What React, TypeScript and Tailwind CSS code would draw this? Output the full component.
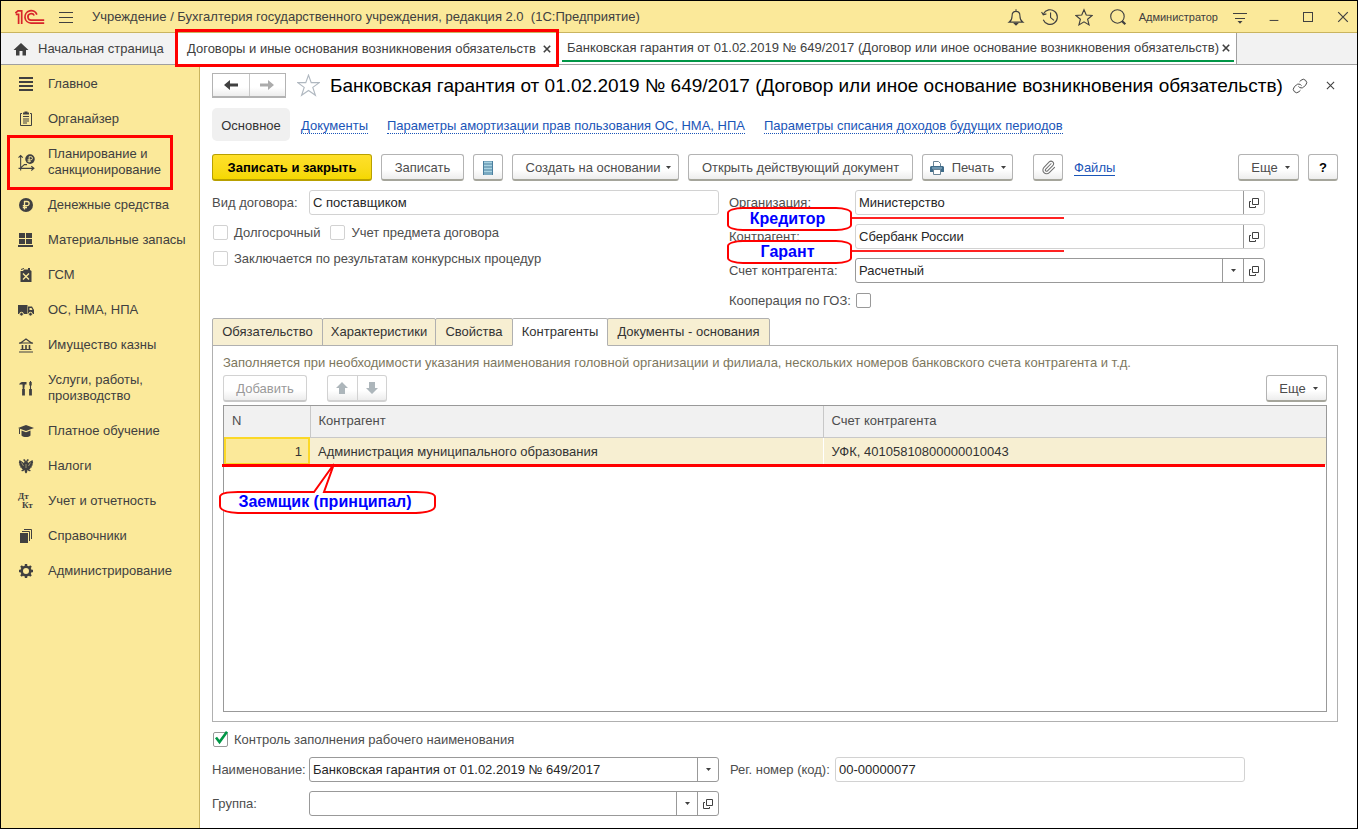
import React, { useState } from "react";
import type { ReactNode } from "react";
import { Link, Paperclip } from "lucide-react";

const Svg = ({ children, className = "size-4" }: { children: ReactNode; className?: string }) => (
  <svg viewBox="0 0 16 16" className={`${className} shrink-0`} fill="none" stroke="currentColor" aria-hidden="true">
    {children}
  </svg>
);

const Logo = () => (
  <svg viewBox="0 0 30 16" className="h-4 w-[30px] shrink-0" fill="none" stroke="#d8232a" strokeWidth="1.7" role="img" aria-label="1С">
    <path d="M.3 4.2 3 1.900h3.700v13M.8 5.400h2.800v9.500" />
    <path d="M21.900 5.600A6.200 6.200 0 1 0 16 14.100h13.200" />
    <path d="M19.200 6.500A3.300 3.300 0 1 0 16 11.200h13.200" />
  </svg>
);

const icons: Record<string, ReactNode> = {
  main: (
    <Svg>
      <path d="M1 2h14M1 6h14M1 10h14M1 14h14" strokeWidth="2" />
    </Svg>
  ),
  organizer: (
    <Svg>
      <path d="M4 2.500H2.500v12h11v-12H12M5 5.500h6M5 8h6M5 10h6M5 12h4" />
      <path d="M5 1.500h1.500V.5h3v1H11v2H5z" fill="currentColor" stroke="none" />
    </Svg>
  ),
  planning: (
    <Svg className="size-[17px]">
      <path d="M2.500 15.500V1.500M.5 3.500l2-2 2 2M.5 13.500h14M12.500 11.500l2.500 2-2.500 2M2.500 13l3.500-3h2.500" />
      <circle cx="11.300" cy="4.800" r="4.500" fill="currentColor" stroke="none" />
      <path d="M10.500 8V2.500h1.600a1.500 1.500 0 0 1 0 3H9M9 6.800h3.200" stroke="#fbe99a" strokeWidth=".9" />
    </Svg>
  ),
  money: (
    <Svg>
      <circle cx="8" cy="8" r="7" fill="currentColor" stroke="none" />
      <path d="M6.500 12.500V4.500h2.500a2 2 0 0 1 0 4.200H4.800M4.800 10.500h4.200" stroke="#fbe99a" strokeWidth="1.300" />
    </Svg>
  ),
  stock: (
    <Svg>
      <path d="M1 1h6v5H1zM8 1h6v5H8zM1 7h6v5H1zM8 7h6v5H8zM0 13h15v2H0z" fill="currentColor" stroke="none" />
    </Svg>
  ),
  fuel: (
    <Svg>
      <path d="M3 4h2L6 2.500h4V1h2v2l1.500 1v11h-11V4z" fill="currentColor" stroke="none" />
      <path d="M3 2.500 6 1.500" />
      <path d="m5 6.500 6 6M11 6.500l-6 6" stroke="#fbe99a" strokeWidth="1.400" />
    </Svg>
  ),
  truck: (
    <Svg>
      <path d="M0 3h9.500v9H0zM10 4.500h4l2 3.500v4h-6z" fill="currentColor" stroke="none" />
      <path d="M11.500 6h2l1 2h-3z" fill="#fbe99a" stroke="none" />
      <circle cx="3.500" cy="12.200" r="1.900" fill="currentColor" stroke="#fbe99a" />
      <circle cx="12.500" cy="12.200" r="1.900" fill="currentColor" stroke="#fbe99a" />
    </Svg>
  ),
  treasury: (
    <Svg>
      <path d="M2.500 6 8 2l5.500 4z" strokeWidth="1.200" />
      <path d="M1 6h2.500M12.500 6H15" />
      <path d="M4.500 8v4M8 8v4M11.500 8v4" strokeWidth="1.600" />
      <path d="M2.500 12.500h11M1 15h14" strokeWidth="1.200" />
    </Svg>
  ),
  services: (
    <Svg>
      <path d="M1 4.500C2 2.500 3.500 2 5 2h3.500v2.500H6.800L6.300 9H4.700l-.2-4.500z" fill="currentColor" stroke="none" />
      <path d="M5.500 9v6.500" strokeWidth="2.800" />
      <path d="M12.500 1v8" strokeWidth="1.100" />
      <path d="M12.500 2v3.500" strokeWidth="2.400" />
      <path d="M12.500 9v6.500" strokeWidth="2.800" />
    </Svg>
  ),
  education: (
    <Svg>
      <path d="M8 2 0 5l8 3 8-3zM3.500 7.500 8 9.200l4.500-1.700v5c-2 2-7 2-9 0z" fill="currentColor" stroke="none" />
      <path d="M1.500 5.500V11" />
    </Svg>
  ),
  taxes: (
    <Svg>
      <path
        d="M8 3.500 7 1.500 5.800 1l-.6 1.500 1.300.5-.5 2L4 3.500 1.500 2 .8 5l1 1-.8 1 1.500 1-.5 1.200L4 10l-.5 1L5 11l-2 2 2 .2L6.500 12 7 14.500l1 1 1-1 .5-2.500L11 13.200l2-.2-2-2 1.500 0-.5-1 2-.8L13.500 8 15 7l-.8-1 1-1-.7-3L12 3.500 10 5l-.5-2 1.300-.5L10.200 1 9 1.500z"
        fill="currentColor"
        stroke="none"
      />
      <path d="M3.500 4.500 5.500 8M12.500 4.500l-2 3.500M8 6v4" stroke="#fbe99a" strokeWidth=".5" />
    </Svg>
  ),
  accounting: (
    <svg viewBox="0 0 16 16" className="size-4 shrink-0 overflow-visible" fill="currentColor" aria-hidden="true">
      <text x="0" y="6" fontFamily="Liberation Serif, serif" fontWeight="700" fontSize="9">Дт</text>
      <text x="4" y="15" fontFamily="Liberation Serif, serif" fontWeight="700" fontSize="9">Кт</text>
    </svg>
  ),
  reference: (
    <Svg>
      <path d="M2 5h8v10H2z" fill="currentColor" stroke="none" />
      <path d="M4 3.500h7.500V13M6 1.500h7.500V11" />
    </Svg>
  ),
  admin: (
    <Svg>
      <circle cx="8" cy="8" r="4.300" strokeWidth="2.600" />
      <path d="M8 1v2.500M8 12.500V15M1 8h2.500M12.500 8H15M3 3l1.800 1.800M11.200 11.200 13 13M13 3l-1.800 1.800M4.800 11.200 3 13" strokeWidth="2.400" />
    </Svg>
  ),
};

const sections: { icon: string; lines: string[]; marked?: boolean }[] = [
  { icon: "main", lines: ["Главное"] },
  { icon: "organizer", lines: ["Органайзер"] },
  { icon: "planning", lines: ["Планирование и", "санкционирование"], marked: true },
  { icon: "money", lines: ["Денежные средства"] },
  { icon: "stock", lines: ["Материальные запасы"] },
  { icon: "fuel", lines: ["ГСМ"] },
  { icon: "truck", lines: ["ОС, НМА, НПА"] },
  { icon: "treasury", lines: ["Имущество казны"] },
  { icon: "services", lines: ["Услуги, работы,", "производство"] },
  { icon: "education", lines: ["Платное обучение"] },
  { icon: "taxes", lines: ["Налоги"] },
  { icon: "accounting", lines: ["Учет и отчетность"] },
  { icon: "reference", lines: ["Справочники"] },
  { icon: "admin", lines: ["Администрирование"] },
];

const Caret = () => (
  <svg viewBox="0 0 5 3" className="h-[3px] w-[5px] shrink-0" fill="#404040" aria-hidden="true">
    <path d="M0 0h5L2.500 3z" />
  </svg>
);

const OpenIcon = () => (
  <svg viewBox="0 0 10 10" className="size-[10px]" fill="none" stroke="#404040" aria-hidden="true">
    <path d="M3.500.5h6v6h-6zM2 3.500H.5v6h6V8" />
  </svg>
);

const Cross = ({ className, width = "1.200" }: { className: string; width?: string }) => (
  <svg viewBox="0 0 10 10" className={className} fill="none" stroke="#404040" strokeWidth={width} aria-hidden="true">
    <path d="m1 1 8 8M9 1 1 9" />
  </svg>
);

function Button({ children, className = "", label }: { children: ReactNode; className?: string; label?: string }) {
  return (
    <button
      type="button"
      aria-label={label}
      className={`flex h-[27px] shrink-0 items-center justify-center rounded-[3px] border border-b-2 border-[#b3b3b3] border-b-[#a5a59b] bg-linear-to-b from-white from-60% to-[#ededed] pt-px text-[#4d4d4d] ${className}`}
    >
      {children}
    </button>
  );
}

function Check({ id, label, className = "border-[#d2d2d2]", defaultChecked = false }: { id: string; label: string; className?: string; defaultChecked?: boolean }) {
  const [on, setOn] = useState(defaultChecked);
  return (
    <div className="flex h-[15px] items-center gap-[6px]">
      <span className="relative flex">
        <input id={id} type="checkbox" checked={on} onChange={() => setOn(!on)} className={`size-[15px] appearance-none rounded-[2px] border bg-white ${className}`} />
        {on && (
          <svg viewBox="0 0 16 16" className="pointer-events-none absolute -top-px left-0 size-4" fill="none" stroke="#009646" strokeWidth="2.600" aria-hidden="true">
            <path d="M3 6.500 6.500 11 14 .8" />
          </svg>
        )}
      </span>
      <label htmlFor={id}>{label}</label>
    </div>
  );
}

function Field({
  id,
  label,
  labelWidth,
  value,
  editable = false,
  kind = "input",
  drop = false,
  open = false,
}: {
  id: string;
  label: string;
  labelWidth: string;
  value: string;
  editable?: boolean;
  kind?: "input" | "select";
  drop?: boolean;
  open?: boolean;
}) {
  const edge = editable ? "border-[#999]" : "border-[#d2d2d2]";
  return (
    <div className="flex h-[25px] items-center">
      <label htmlFor={id} className={`shrink-0 ${labelWidth}`}>
        {label}
      </label>
      <div className={`flex h-full min-w-0 flex-1 overflow-hidden rounded-[3px] border bg-white ${edge}`}>
        {kind === "select" ? (
          <div className="relative min-w-0 flex-1">
            <select id={id} defaultValue={value} className="h-full w-full appearance-none pl-[3px] text-[#262626] outline-none">
              <option>{value}</option>
            </select>
            <span className="pointer-events-none absolute inset-y-0 right-0 flex w-[21px] items-center justify-center border-l border-[#999]">
              <Caret />
            </span>
          </div>
        ) : (
          <input id={id} defaultValue={value} readOnly={!editable} className="min-w-0 flex-1 pl-[3px] text-[#262626] outline-none" />
        )}
        {drop && (
          <button type="button" aria-label="Выбрать из списка" className="flex w-[21px] items-center justify-center border-l border-[#999]">
            <Caret />
          </button>
        )}
        {open && (
          <button type="button" aria-label="Открыть" className="flex w-[21px] items-center justify-center border-l border-[#999]">
            <OpenIcon />
          </button>
        )}
      </div>
    </div>
  );
}

function Callout({ text, className }: { text: string; className: string }) {
  return (
    <div className={`absolute -left-[2px] flex w-[337px] items-center ${className}`}>
      <div className="flex h-6 w-[125px] items-center justify-center rounded-[16px/6px] border-2 border-[#f00] bg-white pr-1 pb-px text-[16px] leading-4 font-bold text-[#00f]">{text}</div>
      <div className="-mt-[2px] h-[2px] flex-1 bg-[#f22]" />
    </div>
  );
}

const formTabs = [
  { text: "Обязательство", width: "w-[111px]" },
  { text: "Характеристики", width: "w-[114px]" },
  { text: "Свойства", width: "w-[78px]" },
  { text: "Контрагенты", width: "w-[96px]", active: true },
  { text: "Документы - основания", width: "w-[163px]" },
];

const links = ["Документы", "Параметры амортизации прав пользования ОС, НМА, НПА", "Параметры списания доходов будущих периодов"];

export default function App() {
  return (
    <div className="flex min-h-screen flex-col border border-black bg-white font-['Liberation_Sans',Arial,sans-serif] text-[13px] leading-4 text-[#4d4d4d]">
      <header className="flex h-8 items-center border-b border-[#c9b45f] bg-[#fbe99a] pr-2 pl-[14px] text-[#404040]">
        <Logo />
        <button type="button" aria-label="Меню" className="ml-[13px]">
          <Svg>
            <path d="M1 3.500h14M1 8.500h14M1 13.500h14" />
          </Svg>
        </button>
        <h1 className="ml-[18px] flex-1 pt-px whitespace-nowrap">Учреждение / Бухгалтерия государственного учреждения, редакция 2.0&nbsp; (1С:Предприятие)</h1>
        <button type="button" aria-label="Уведомления">
          <Svg className="size-[18px]">
            <path d="M2 12.500c1.800-1.200 2.500-3 2.500-5.500C4.500 4.500 6 3 8 3s3.500 1.500 3.500 4c0 2.500.7 4.300 2.500 5.500zM8 3V1.200" />
            <path d="M6.500 13.500h3L8 15z" fill="currentColor" />
          </Svg>
        </button>
        <button type="button" aria-label="История" className="ml-4">
          <Svg className="size-[18px]">
            <path d="M2.200 5.200A6.500 6.500 0 1 1 2 10.500M8.500 4v4.500l3 2.500M.5 3.500l1.500 2.500 2.800-.8" />
          </Svg>
        </button>
        <button type="button" aria-label="Избранное" className="ml-4">
          <Svg className="size-[18px]">
            <path d="m8 1.500 2 4.800 5.200.4-4 3.300 1.300 5L8 12.300 3.500 15l1.300-5-4-3.300 5.200-.4z" />
          </Svg>
        </button>
        <button type="button" aria-label="Поиск" className="ml-4">
          <Svg className="size-[18px]">
            <circle cx="7.500" cy="7.500" r="6" />
            <path d="m11.500 11.500 3 3" strokeWidth="2" />
          </Svg>
        </button>
        <a href="#user" className="ml-3 text-[11px]">Администратор</a>
        <button type="button" aria-label="Настройки" className="ml-[14px]">
          <Svg>
            <path d="M1 4.500h14M3 9.500h10" />
            <path d="M5.500 12h5L8 14.800z" fill="currentColor" stroke="none" />
          </Svg>
        </button>
        <button type="button" aria-label="Свернуть" className="ml-[21px]">
          <Svg className="size-[10px]">
            <path d="M1 13.500h14" strokeWidth="1.600" />
          </Svg>
        </button>
        <button type="button" aria-label="Развернуть" className="ml-6">
          <span className="block size-[10px] border border-[#404040]" />
        </button>
        <button type="button" aria-label="Закрыть" className="ml-6">
          <Cross className="size-[12px]" width="1" />
        </button>
      </header>

      <nav aria-label="Открытые окна" className="flex h-8 items-stretch border-b border-[#a0a0a0] bg-[#f2f2f2] text-[#404040]">
        <a href="#home" className="flex w-[175px] shrink-0 items-center gap-[9px] pl-3 whitespace-nowrap">
          <svg viewBox="0 0 16 14" className="h-[14px] w-4" fill="#404040" aria-hidden="true">
            <path d="M8 1 .5 8H3v5.500h3.500V9h3v4.500H13V8h2.500z" />
          </svg>
          Начальная страница
        </a>
        <div className="relative flex w-[384px] shrink-0 items-center justify-between bg-white pr-[9px] pl-[11px] whitespace-nowrap">
          <a href="#list">Договоры и иные основания возникновения обязательств</a>
          <button type="button" aria-label="Закрыть вкладку">
            <Cross className="size-2" width="2" />
          </button>
          <span className="pointer-events-none absolute -top-1 right-px -bottom-[3px] -left-px z-10 border-[3px] border-[#f00]" />
        </div>
        <div className="flex w-[677px] shrink-0 border-r border-[#a0a0a0] bg-white px-[2px]">
          <div className="mb-[2px] flex flex-1 items-center justify-between border-b-2 border-[#009646] pt-[3px] pr-1 pl-[5px] whitespace-nowrap">
            <a href="#current">Банковская гарантия от 01.02.2019 № 649/2017 (Договор или иное основание возникновения обязательств)</a>
            <button type="button" aria-label="Закрыть вкладку">
              <Cross className="size-2" width="2" />
            </button>
          </div>
        </div>
      </nav>

      <div className="flex flex-1">
        <nav aria-label="Разделы" className="w-[199px] shrink-0 border-r border-[#c9b45f] bg-[#fbe99a] pt-px text-[#404040]">
          {sections.map((s) => (
            <a key={s.icon} href={`#${s.icon}`} className="relative flex items-center pt-[10px] pb-[9px] pl-[17px]">
              <span className="flex w-[30px] shrink-0">{icons[s.icon]}</span>
              <span>
                {s.lines.map((l) => (
                  <span key={l} className="block whitespace-nowrap">{l}</span>
                ))}
              </span>
              {s.marked && <span className="pointer-events-none absolute -top-px right-[26px] -bottom-[3px] left-[6px] border-[3px] border-[#f00]" />}
            </a>
          ))}
        </nav>

        <main className="flex min-w-0 flex-1 flex-col pt-2 pr-[19px] pb-3 pl-3">
          <div className="flex h-[25px] items-center">
            <div className="flex h-[25px] w-[74px] border border-b-2 border-[#b3b3b3] bg-linear-to-b from-white from-60% to-[#ededed]">
              <button type="button" aria-label="Назад" className="flex flex-1 items-center justify-center border-r border-[#c8c8c8] text-[#404040]">
                <svg viewBox="0 0 14 10" className="h-[10px] w-[14px]" fill="currentColor" aria-hidden="true">
                  <path d="M0 5 6 0v3.500h8v3H6V10z" />
                </svg>
              </button>
              <button type="button" aria-label="Вперед" className="flex flex-1 items-center justify-center text-[#ababab]">
                <svg viewBox="0 0 14 10" className="h-[10px] w-[14px]" fill="currentColor" aria-hidden="true">
                  <path d="M14 5 8 0v3.500H0v3h8V10z" />
                </svg>
              </button>
            </div>
            <button type="button" aria-label="В избранное" className="ml-[11px] text-[#b0b8c0]">
              <Svg className="size-[23px]">
                <path d="m8 .8 1.900 5.200h5.600l-4.500 3.300 1.800 5.500L8 11.500l-4.800 3.300L5 9.300.5 6h5.600z" strokeWidth=".8" />
              </Svg>
            </button>
            <h2 className="ml-[10px] flex-1 text-[19px] leading-6 whitespace-nowrap text-black">Банковская гарантия от 01.02.2019 № 649/2017 (Договор или иное основание возникновения обязательств)</h2>
            <button type="button" aria-label="Ссылка">
              <Link className="size-4" strokeWidth={1.5} />
            </button>
            <button type="button" aria-label="Закрыть форму" className="mr-[3px] ml-[18px]">
              <Cross className="size-[9px]" />
            </button>
          </div>

          <nav aria-label="Навигация формы" className="mt-[10px] flex h-[33px] items-center whitespace-nowrap">
            <span className="flex h-full w-[78px] items-center justify-center rounded-[5px] bg-[#f0f0f0] pt-[2px] text-[#333]">Основное</span>
            <div className="ml-[11px] flex gap-[19px] pt-[2px]">
              {links.map((l) => (
                <a key={l} href="#section" className="border-b border-dotted border-[#1a55b8] leading-[15px] text-[#1a55b8]">{l}</a>
              ))}
            </div>
          </nav>

          <div className="mt-[13px] flex items-center whitespace-nowrap">
            <button type="button" className="h-[27px] w-[160px] rounded-[3px] border border-b-2 border-[#b8a000] bg-linear-to-b from-[#ffe02a] to-[#f5d800] pt-px font-bold text-black">Записать и закрыть</button>
            <Button className="ml-[9px] w-[83px]">Записать</Button>
            <Button className="ml-[9px] w-[30px]" label="Список">
              <svg viewBox="0 0 10 14" className="h-[14px] w-[10px]" aria-hidden="true">
                <path d="M0 0h10v14H0z" fill="#4b7f9f" />
                <path d="M1 1.500h8M1 4.500h8M1 7.500h8M1 10.500h8" stroke="#a9d3e2" strokeWidth="2" />
                <path d="M1 13h8" stroke="#a9d3e2" />
              </svg>
            </Button>
            <Button className="ml-[9px] w-[167px] gap-[6px] pl-[6px]">Создать на основании <Caret /></Button>
            <Button className="ml-[9px] w-[225px]">Открыть действующий документ</Button>
            <Button className="ml-[9px] w-[91px] gap-[7px]">
              <svg viewBox="0 0 16 16" className="size-4" aria-hidden="true">
                <path d="M4.500 6V1.500h5l2 2V6" fill="#fff" stroke="#6a8496" />
                <path d="M1 7l1-1h12l1 1v5H1z" fill="#3f6c8a" />
                <path d="M3 8h10" stroke="#9fc0d4" />
                <path d="M4.500 9.500h7v5h-7z" fill="#fff" stroke="#6a8496" />
              </svg>
              Печать <Caret />
            </Button>
            <Button className="ml-5 w-[30px]" label="Вложения">
              <Paperclip className="size-[15px] text-[#707070]" strokeWidth={1.7} />
            </Button>
            <a href="#files" className="ml-[11px] border-b border-[#1a55b8] leading-[15px] text-[#1a55b8]">Файлы</a>
            <Button className="ml-auto w-[61px] gap-[7px] pl-1">Еще <Caret /></Button>
            <Button className="ml-[9px] w-[30px] font-bold text-black" label="Справка">?</Button>
          </div>

          <div className="mt-[9px] grid grid-cols-[507fr_536fr] gap-[10px] pr-[73px]">
            <div>
              <Field id="kind" label="Вид договора:" labelWidth="w-[97px]" value="С поставщиком" />
              <div className="mt-[10px] flex gap-[10px] pl-px">
                <Check id="long" label="Долгосрочный" />
                <Check id="subject" label="Учет предмета договора" />
              </div>
              <div className="mt-[11px] pl-px">
                <Check id="tender" label="Заключается по результатам конкурсных процедур" />
              </div>
            </div>
            <div className="relative flex flex-col gap-[9px]">
              <Field id="org" label="Организация:" labelWidth="w-[126px]" value="Министерство" open />
              <Field id="agent" label="Контрагент:" labelWidth="w-[126px]" value="Сбербанк России" open />
              <Field id="account" label="Счет контрагента:" labelWidth="w-[126px]" value="Расчетный" editable kind="select" open />
              <div className="flex h-[17px] items-center">
                <label htmlFor="goz" className="w-[127px]">Кооперация по ГОЗ:</label>
                <input id="goz" type="checkbox" className="size-[15px] appearance-none rounded-[2px] border border-[#999] bg-white" />
              </div>
              <Callout text="Кредитор" className="top-[17px]" />
              <Callout text="Гарант" className="top-[50px]" />
            </div>
          </div>

          <div role="tablist" className="mt-[9px] flex h-7">
            {formTabs.map((t, i) => (
              <button
                key={t.text}
                type="button"
                role="tab"
                aria-selected={!!t.active}
                className={`rounded-t-[2px] border border-[#b0b0b0] whitespace-nowrap text-[#333] ${i > 0 ? "-ml-px" : ""} ${t.width} ${t.active ? "z-10 border-b-white bg-white" : "bg-[#f7efd2]"}`}
              >
                {t.text}
              </button>
            ))}
          </div>
          <section className="-mt-px flex flex-1 flex-col border border-[#b0b0b0] px-[10px] pt-[9px] pb-[9px]">
            <p className="text-[#7d775d]">Заполняется при необходимости указания наименования головной организации и филиала, нескольких номеров банковского счета контрагента и т.д.</p>
            <div className="mt-1 flex">
              <Button className="w-[84px] border-[#d2d2d2] border-b-[#c8c8c8] text-[#999]">Добавить</Button>
              <div className="ml-5 flex h-[27px] w-[60px] rounded-[3px] border border-b-2 border-[#d2d2d2] bg-linear-to-b from-white from-60% to-[#ededed]">
                <button type="button" aria-label="Вверх" className="flex flex-1 items-center justify-center border-r border-[#d2d2d2]">
                  <svg viewBox="0 0 12 12" className="size-3" fill="#adb6bb" aria-hidden="true">
                    <path d="m6 0 6 6H9v6H3V6H0z" />
                  </svg>
                </button>
                <button type="button" aria-label="Вниз" className="flex flex-1 items-center justify-center">
                  <svg viewBox="0 0 12 12" className="size-3" fill="#adb6bb" aria-hidden="true">
                    <path d="m6 12 6-6H9V0H3v6H0z" />
                  </svg>
                </button>
              </div>
              <Button className="ml-auto w-[61px] gap-[7px] pl-1">Еще <Caret /></Button>
            </div>
            <div className="relative mt-[3px] flex-1 border border-[#999]">
              <table className="w-full table-fixed border-collapse text-left">
                <colgroup>
                  <col className="w-[86px]" />
                  <col className="w-[513px]" />
                  <col />
                </colgroup>
                <thead>
                  <tr className="h-[31px] border-b border-[#c8c8c8] bg-[#f1f1f1]">
                    <th className="border-r border-[#c8c8c8] pl-2 font-normal">N</th>
                    <th className="border-r border-[#c8c8c8] pl-2 font-normal">Контрагент</th>
                    <th className="pl-2 font-normal">Счет контрагента</th>
                  </tr>
                </thead>
                <tbody>
                  <tr className="h-7 bg-[#f7efd2] text-[#333]">
                    <td className="bg-[#fbe99a] pt-px pr-2 text-right outline-2 -outline-offset-2 outline-[#fbd827]">1</td>
                    <td className="border-r border-white pt-px pl-2">Администрация муниципального образования</td>
                    <td className="pt-px pl-2">УФК, 40105810800000010043</td>
                  </tr>
                </tbody>
              </table>
              <div className="absolute top-[58px] -left-[2px] right-px h-[3px] bg-[#f00]" />
              <div className="absolute top-[55px] -left-[6px] h-[54px] w-[220px]">
                <svg viewBox="0 0 220 54" className="absolute inset-0 size-full" fill="#fff" stroke="#f00" strokeWidth="2" aria-hidden="true">
                  <path d="M20 31H96L116 3 106 31H198Q217 31 217 36V45Q217 51 198 52H20Q2 51 2 45V36Q2 31 20 31Z" />
                </svg>
                <span className="absolute right-[6px] bottom-[5px] left-0 text-center text-[16px] leading-4 font-bold text-[#00f]">Заемщик (принципал)</span>
              </div>
            </div>
          </section>

          <div className="mt-[10px] pl-px">
            <Check id="control" label="Контроль заполнения рабочего наименования" className="border-[#999]" defaultChecked />
          </div>
          <div className="mt-[10px] grid grid-cols-[507fr_515fr] gap-x-[11px] gap-y-[9px] pr-[93px]">
            <Field id="name" label="Наименование:" labelWidth="w-[97px]" value="Банковская гарантия от 01.02.2019 № 649/2017" editable drop />
            <Field id="code" label="Рег. номер (код):" labelWidth="w-[105px]" value="00-00000077" />
            <Field id="group" label="Группа:" labelWidth="w-[97px]" value="" editable kind="select" open />
          </div>
        </main>
      </div>
    </div>
  );
}
